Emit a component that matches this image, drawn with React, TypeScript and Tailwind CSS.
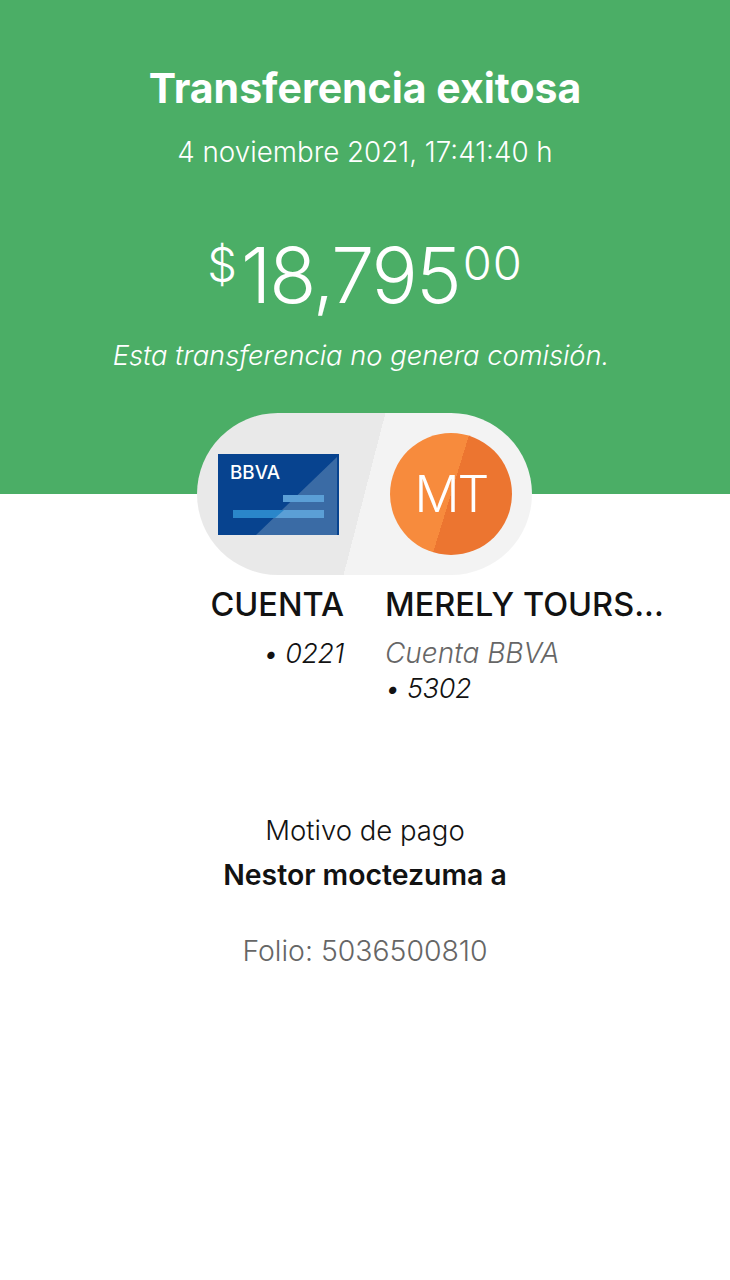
export default function App() {
  return (
    <div className="min-h-[1280px] bg-white font-['Inter',sans-serif] text-[#121212]">
      {/* Green header */}
      <div className="flex h-[494px] flex-col items-center bg-[#4bae66] pt-[62px] text-white">
        <h1 className="text-[41px] leading-[52px] font-bold">Transferencia exitosa</h1>
        <p className="mt-[20px] text-[27.75px] leading-[36px] font-light">4 noviembre 2021, 17:41:40 h</p>
        <div className="mt-[60px] flex items-start font-light">
          <span className="mt-[9px] mr-[4px] text-[47px] leading-[50px]">$</span>
          <span className="text-[77px] leading-[90px] tracking-[-2px]">18,795</span>
          <span className="mt-[8px] ml-[3px] text-[47px] leading-[50px] tracking-[1px]">00</span>
        </div>
        <p className="mt-[18px] mr-[8px] text-[27.3px] leading-[36px] font-light italic">Esta transferencia no genera comisión.</p>
      </div>

      {/* Origin / destination pill */}
      <div className="-mt-[81px] ml-[197px] flex h-[162px] w-[335px] items-center justify-between rounded-full bg-[linear-gradient(104.5deg,#e9e9e9_50%,#f3f3f3_50%)] pr-[20px] pl-[21px]">
        <svg width="121" height="81" viewBox="0 0 121 81">
          <rect width="121" height="81" fill="#07438f" />
          <path d="M38 81 L119 3 V81 Z" fill="#3a6ba5" />
          <rect x="15" y="56" width="91" height="8" fill="#2a86ca" />
          <rect x="65" y="41" width="41" height="7" fill="#5b9fd6" />
          <path d="M66 56 H106 V64 H57 Z" fill="#5b9fd6" />
          <text x="12" y="25" fill="#ffffff" fontSize="18" fontWeight="500" fontFamily="Inter, sans-serif" textLength="50" lengthAdjust="spacingAndGlyphs">BBVA</text>
        </svg>
        <div className="flex h-[122px] w-[122px] items-center justify-center rounded-full bg-[linear-gradient(107deg,#f78b3d_50%,#ec7530_50%)] text-[50px] font-light tracking-[-2px] text-white">
          MT
        </div>
      </div>

      {/* Accounts */}
      <div className="mt-[10px] grid grid-cols-2 gap-x-[42px]">
        <div className="text-right">
          <p className="text-[32.5px] leading-[40px] font-medium">CUENTA</p>
          <p className="mt-[11px] text-[27px] leading-[35px] font-light tracking-[-0.4px] italic">• 0221</p>
        </div>
        <div className="-ml-px">
          <p className="text-[32.5px] leading-[40px] font-medium">MERELY TOURS...</p>
          <p className="mt-[11px] text-[28px] leading-[35px] font-light text-[#666666] italic">Cuenta BBVA</p>
          <p className="text-[27px] leading-[35px] font-light tracking-[-0.4px] italic">• 5302</p>
        </div>
      </div>

      {/* Payment details */}
      <div className="mt-[106px] flex flex-col items-center">
        <p className="text-[27.5px] leading-[36px] font-light">Motivo de pago</p>
        <p className="mt-[9px] text-[28.4px] leading-[36px] font-semibold">Nestor moctezuma a</p>
        <p className="mt-[40px] text-[28.4px] leading-[36px] font-light text-[#666666]">Folio: 5036500810</p>
      </div>
    </div>
  );
}
